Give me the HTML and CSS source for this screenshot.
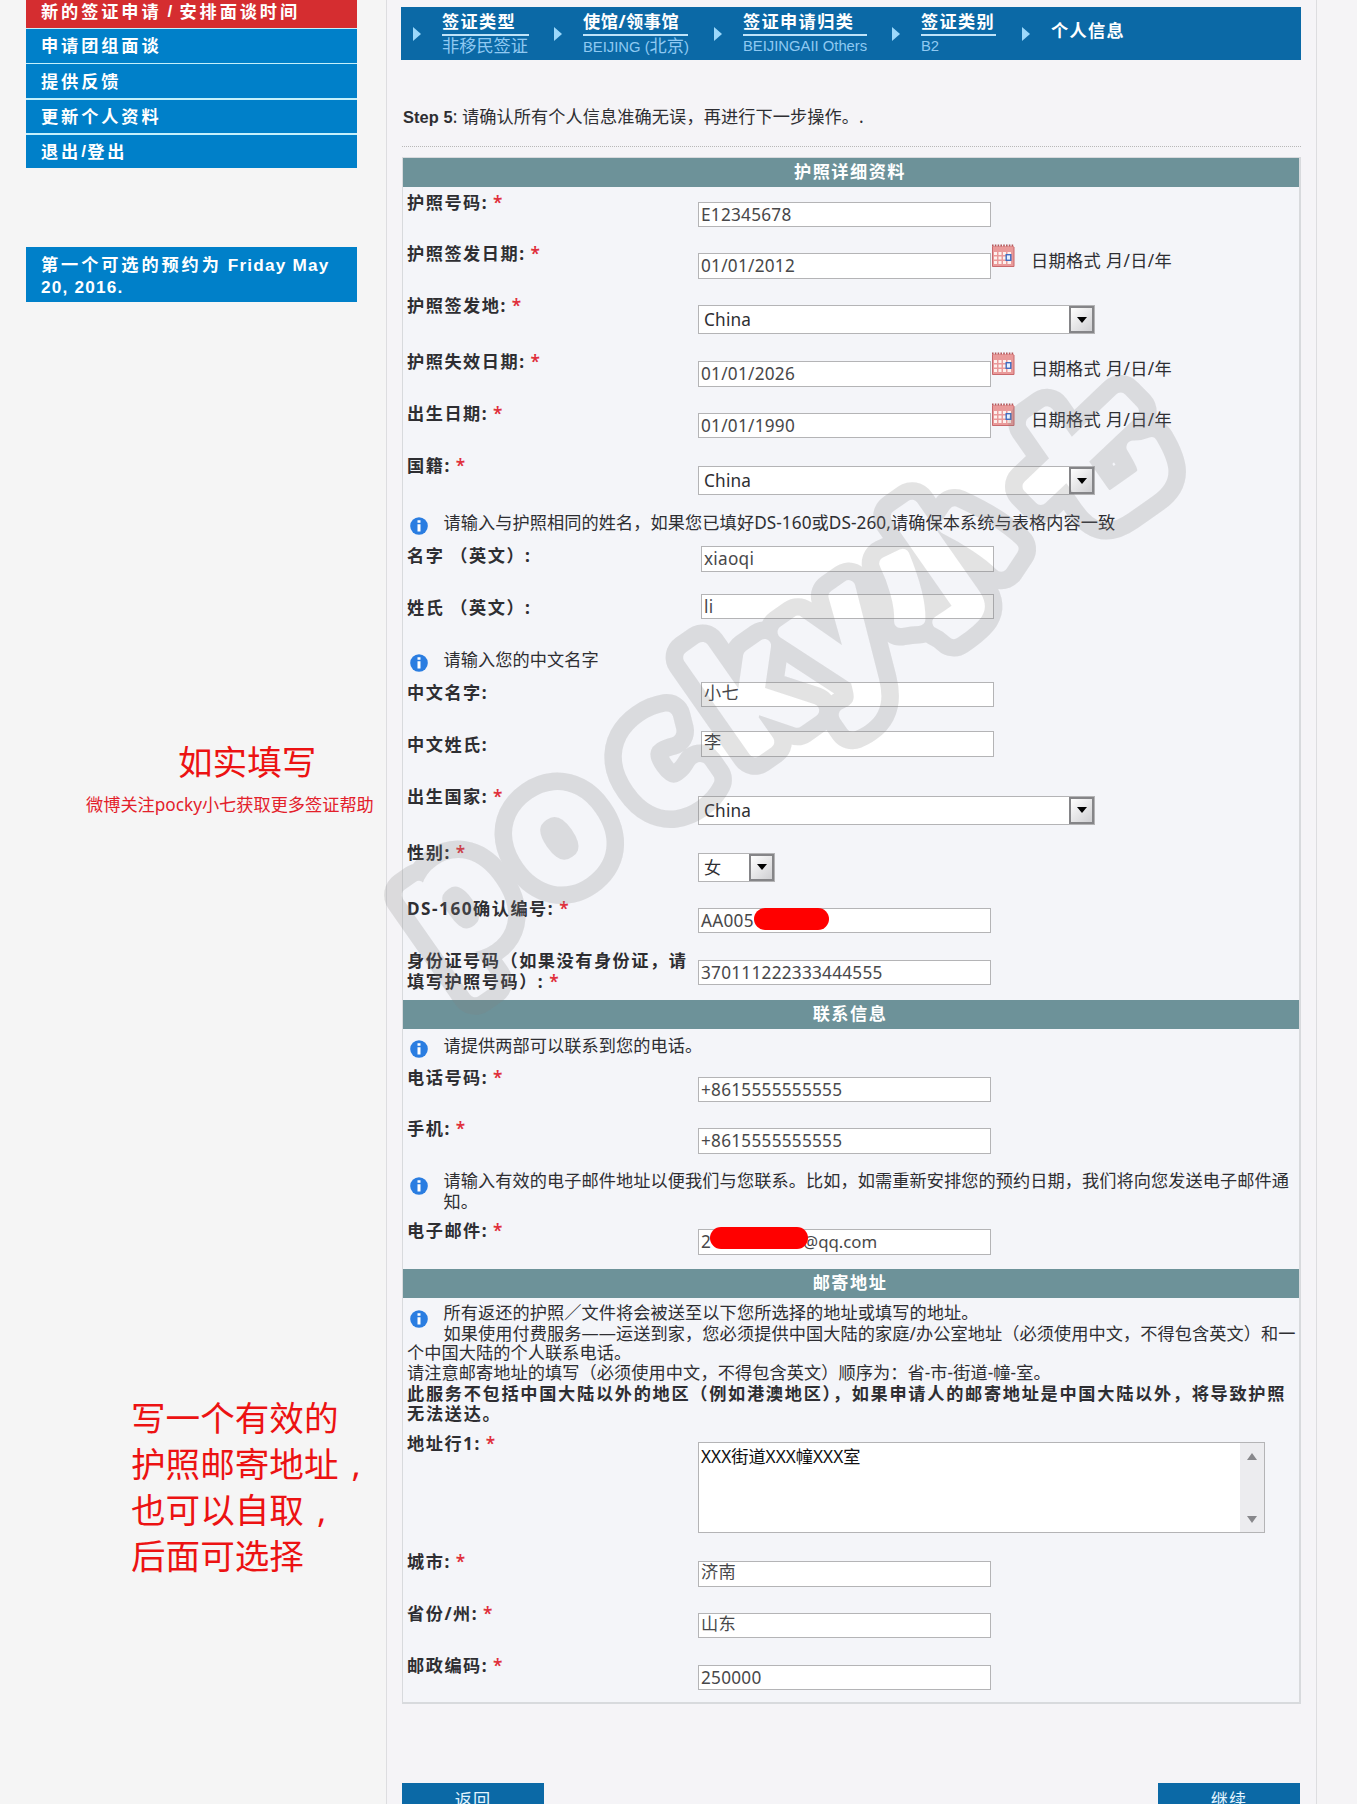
FILE: index.html
```html
<!DOCTYPE html>
<html lang="zh-CN">
<head>
<meta charset="utf-8">
<title>个人信息</title>
<link rel="stylesheet" href="styles.css">
</head>
<body>
<svg class="defs" width="0" height="0" aria-hidden="true">
  <symbol id="info" viewBox="0 0 18 18">
    <circle cx="9" cy="9" r="8.8" fill="#2a7de1"/>
    <path d="M7.5 3.2h3v2.6h-3zM7.5 7.2h3v7.2h-3z" fill="#fff"/>
  </symbol>
  <symbol id="calendar" viewBox="0 0 24 23">
    <rect x="1" y="2" width="22" height="20.5" fill="#e99a9a"/>
    <path d="M1 1.5h22" stroke="#b2595d" stroke-width="2" stroke-dasharray="1.6 1.2"/>
    <path d="M1.5 3v19.5h21.5V3" fill="none" stroke="#c9686c"/>
    <path d="M3 8h3v3H3zM7.5 8h3v3h-3zM12 8h3v3h-3zM16.5 8h3.5v3h-3.5zM3 12.5h3v3H3zM7.5 12.5h3v3h-3zM12 12.5h3v3h-3zM3 17h3v3H3zM7.5 17h3v3h-3zM12 17h3v3h-3zM16.5 17h3.5v3h-3.5z" fill="#fdf1ee"/>
    <rect x="15.2" y="10.7" width="4.6" height="5.6" fill="#e8f1ff" stroke="#3e6cc0" stroke-width="1.4"/>
  </symbol>
</svg>
<div class="page">
  <aside class="sidebar">
    <nav class="menu">
      <a class="menu-item menu-item--active">新的签证申请<span class="latin"> / </span>安排面谈时间</a>
      <a class="menu-item">申请团组面谈</a>
      <a class="menu-item">提供反馈</a>
      <a class="menu-item">更新个人资料</a>
      <a class="menu-item">退出<span class="latin">/</span>登出</a>
    </nav>
    <div class="slot">第一个可选的预约为<span class="latin"> Friday May<br>20, 2016.</span></div>
    <p class="note-big">如实填写</p>
    <p class="note-small">微博关注pocky小七获取更多签证帮助</p>
    <p class="note-address">写一个有效的<br>护照邮寄地址<span class="comma">,</span><br>也可以自取<span class="comma">,</span><br>后面可选择</p>
  </aside>

  <main class="main">
    <ol class="steps">
      <li class="step step--type"><b>签证类型</b><span>非移民签证</span></li>
      <li class="step step--post"><b>使馆/领事馆</b><span>BEIJING (<i>北京</i>)</span></li>
      <li class="step step--class"><b>签证申请归类</b><span>BEIJINGAII Others</span></li>
      <li class="step step--visa"><b>签证类别</b><span>B2</span></li>
      <li class="step step--current"><b>个人信息</b></li>
    </ol>
    <p class="lead"><b>Step 5</b>: 请确认所有个人信息准确无误，再进行下一步操作。.</p>

    <form class="form">
      <h2 class="heading">护照详细资料</h2>
      <section class="passport">
        <div class="row"><label>护照号码:<em>*</em></label><span class="input">E12345678</span></div>
        <div class="row"><label>护照签发日期:<em>*</em></label><span class="input">01/01/2012</span><svg class="cal"><use href="#calendar"/></svg><span class="hint">日期格式 月/日/年</span></div>
        <div class="row row--select"><label>护照签发地:<em>*</em></label><span class="select">China<i></i></span></div>
        <div class="row"><label>护照失效日期:<em>*</em></label><span class="input">01/01/2026</span><svg class="cal"><use href="#calendar"/></svg><span class="hint">日期格式 月/日/年</span></div>
        <div class="row"><label>出生日期:<em>*</em></label><span class="input">01/01/1990</span><svg class="cal"><use href="#calendar"/></svg><span class="hint">日期格式 月/日/年</span></div>
        <div class="row row--nation"><label>国籍:<em>*</em></label><span class="select">China<i></i></span></div>
        <div class="tip"><svg class="info"><use href="#info"/></svg><p>请输入与护照相同的姓名，如果您已填好DS-160或DS-260,请确保本系统与表格内容一致</p></div>
        <div class="row row--name row--given"><label>名字 （英文）:</label><span class="input">xiaoqi</span></div>
        <div class="row row--name row--family"><label>姓氏 （英文）:</label><span class="input">li</span></div>
        <div class="tip"><svg class="info"><use href="#info"/></svg><p>请输入您的中文名字</p></div>
        <div class="row row--name row--cngiven"><label>中文名字:</label><span class="input input--cjk">小七</span></div>
        <div class="row row--name row--cnfamily"><label>中文姓氏:</label><span class="input input--cjk">李</span></div>
        <div class="row row--select"><label>出生国家:<em>*</em></label><span class="select">China<i></i></span></div>
        <div class="row row--select"><label>性别:<em>*</em></label><span class="select select--short">女<i></i></span></div>
        <div class="row"><label>DS-160确认编号:<em>*</em></label><span class="input">AA005<s class="redact redact--ds"></s></span></div>
        <div class="row"><label>身份证号码（如果没有身份证，请<br>填写护照号码）:<em>*</em></label><span class="input">370111222333444555</span></div>
      </section>

      <h2 class="heading">联系信息</h2>
      <section class="contact">
        <div class="tip tip--phones"><svg class="info"><use href="#info"/></svg><p>请提供两部可以联系到您的电话。</p></div>
        <div class="row"><label>电话号码:<em>*</em></label><span class="input">+8615555555555</span></div>
        <div class="row"><label>手机:<em>*</em></label><span class="input">+8615555555555</span></div>
        <div class="tip tip--mail"><svg class="info"><use href="#info"/></svg><p>请输入有效的电子邮件地址以便我们与您联系。比如，如需重新安排您的预约日期，我们将向您发送电子邮件通<br>知。</p></div>
        <div class="row row--mail"><label>电子邮件:<em>*</em></label><span class="input">2<span class="mail-host">@qq.com</span><s class="redact redact--mail"></s></span></div>
      </section>

      <h2 class="heading">邮寄地址</h2>
      <section class="address">
        <div class="tip tip--post"><svg class="info"><use href="#info"/></svg><p>所有返还的护照／文件将会被送至以下您所选择的地址或填写的地址。<br>如果使用付费服务——运送到家，您必须提供中国大陆的家庭/办公室地址（必须使用中文，不得包含英文）和一</p></div>
        <p class="para">个中国大陆的个人联系电话。<br>请注意邮寄地址的填写（必须使用中文，不得包含英文）顺序为：省-市-街道-幢-室。</p>
        <p class="para para--strong">此服务不包括中国大陆以外的地区（例如港澳地区），如果申请人的邮寄地址是中国大陆以外，将导致护照<br>无法送达。</p>
        <div class="row row--area"><label>地址行1:<em>*</em></label><span class="area"><span>XXX街道XXX幢XXX室</span><i class="scroll"></i></span></div>
        <div class="row"><label>城市:<em>*</em></label><span class="input input--cjk">济南</span></div>
        <div class="row"><label>省份/州:<em>*</em></label><span class="input input--cjk">山东</span></div>
        <div class="row"><label>邮政编码:<em>*</em></label><span class="input">250000</span></div>
      </section>
    </form>
    <div class="actions"><a class="button">返回</a><a class="button">继续</a></div>
  </main>

  <svg class="watermark" viewBox="0 0 1360 1806" aria-hidden="true">
    <defs>
      <g id="mark" text-anchor="middle" stroke-linejoin="round">
        <text class="mark-latin" x="-122 0 125 240 342" y="41">pocky</text>
        <text class="mark-cjk" x="470 650" y="46">小七</text>
      </g>
      <mask id="ring" maskUnits="userSpaceOnUse" x="-300" y="-300" width="1200" height="600">
        <use href="#mark" fill="#fff" stroke="#fff" stroke-width="48"/>
        <use href="#mark" fill="#000" stroke="#000" stroke-width="13"/>
      </mask>
    </defs>
    <g transform="translate(559 838) rotate(-35)">
      <rect x="-300" y="-300" width="1200" height="600" fill="#808080" fill-opacity=".22" mask="url(#ring)"/>
    </g>
  </svg>
</div>
</body>
</html>
```
FILE: styles.css
```css
* { box-sizing: border-box; }
body {
  margin: 0;
  background: #fff;
  color: #2e2e32;
  font: 17.2px/21px "Noto Sans", "Noto Sans CJK SC", sans-serif;
}
p, h2, ol { margin: 0; padding: 0; }
i, em { font-style: normal; }
.defs { position: absolute; }

.page {
  position: relative;
  display: flex;
  width: 1357px;
  height: 1804px;
  overflow: hidden;
  background: #f5f4f6;
}

/* sidebar */
.sidebar {
  width: 386px;
  padding-left: 26px;
  background: #f5f5f5;
  white-space: nowrap;
}
.menu { width: 331px; background: #c4f0fb; display: grid; grid-template-rows: 27.5px 33.5px 34px 33.7px 33.5px; gap: 1.5px; }
.menu-item {
  display: flex;
  align-items: center;
  padding-left: 15px;
  background: #0080c9;
  color: #fff;
  font-weight: 700;
  letter-spacing: 2.9px;
  white-space: pre;
}
.menu-item--active { background: #d52d30; padding-bottom: 5px; }
.latin { font-family: "Liberation Sans", sans-serif; letter-spacing: 1.2px; }
.slot {
  width: 331px;
  height: 55px;
  margin-top: 79px;
  padding: 7px 0 0 15px;
  background: #0080c9;
  color: #fff;
  font-weight: 700;
  letter-spacing: 2.9px;
}
.note-big { margin: 437px 0 0 152px; font-size: 34.6px; line-height: 46px; color: #ec1212; }
.note-small { margin: 9px 0 0 60px; color: #e3202a; }
.note-address { margin: 580px 0 0 105px; font-size: 34.6px; line-height: 46px; color: #ec1212; }
.comma { padding-left: 13px; }

/* main column */
.main {
  width: 931px;
  padding: 7px 15px 0 15px;
  border: solid #dddde0;
  border-width: 0 1px;
  background: #f5f4f7;
  white-space: nowrap;
}
.steps {
  display: flex;
  height: 53px;
  margin-left: -1px;
  background: #0b69a6;
  list-style: none;
}
.step {
  display: flex;
  flex-direction: column;
  align-items: flex-start;
  position: relative;
  padding: 3px 0 0 29px;
  margin-left: 12px;
}
.step::before {
  content: "";
  position: absolute;
  left: 0;
  top: 20px;
  border: solid transparent;
  border-width: 7px 0 7px 8px;
  border-left-color: #9cd8fb;
}
.step b { color: #fff; letter-spacing: 1.35px; line-height: 24px; }
.step span {
  align-self: stretch;
  border-top: 2px solid #bfe3f8;
  color: #8fc9f2;
  font: 14.8px/21px "Liberation Sans", "Noto Sans CJK SC", sans-serif;
}
.step i, .step--type span { font-size: 17.2px; }
.step--type { width: 116px; }
.step--post { width: 134px; margin-left: 25px; }
.step--post b { letter-spacing: .5px; }
.step--class { width: 153px; margin-left: 26px; }
.step--visa { width: 104px; margin-left: 25px; }
.step--current { margin-left: 26px; padding-top: 12px; }

.lead { height: 86.5px; padding: 46px 0 0 1px; border-bottom: 1px dotted #b8b8b8; letter-spacing: .08px; }
.lead b { font: 700 16.4px/21px "Liberation Sans", sans-serif; }

.form {
  height: 1546.5px;
  margin-top: 10.5px;
  border: 1px solid #d8dadd;
  border-width: 1px 2px 2px 1px;
  background: #f4f5f9;
}
.heading {
  width: 896px;
  height: 29px;
  padding-right: 2px;
  background: #6d9299;
  color: #fff;
  font-size: 17.2px;
  line-height: 27px;
  letter-spacing: 1.45px;
  text-align: center;
}
.passport { height: 813px; padding-top: 4.5px; }
.contact { height: 240px; padding-top: 5.5px; }
.address { padding-top: 3.5px; }

.row { display: flex; align-items: flex-start; height: 51.8px; }
.row--select { height: 56px; }
.row--nation { height: 57px; }
.row--area { height: 118.5px; margin-top: 9px; }
.row label { width: 295px; padding-left: 4px; font-weight: 700; letter-spacing: 1.5px; white-space: pre; }
.row em { padding-left: 5px; color: #e0303c; font-weight: 600; }

.input, .select, .area {
  position: relative;
  margin-top: 10px;
  border: 1px solid #b4b4b6;
  background: #fff;
}
.input {
  width: 293px;
  height: 25.5px;
  padding-left: 2px;
  color: #48484a;
  line-height: 24px;
  letter-spacing: .26px;
}
.input--cjk { line-height: 20px; }
.row--name .input { margin-left: 3px; }
.row--given .input { margin-top: 1px; }
.row--family .input { margin-top: -3px; }
.row--cngiven .input { margin-top: -.5px; }
.row--cnfamily .input { margin-top: -3px; }

.cal { width: 24px; height: 23px; margin-top: .5px; }
.hint { margin: 6.5px 0 0 16px; letter-spacing: .35px; }

.select {
  display: flex;
  justify-content: space-between;
  width: 397px;
  height: 29px;
  padding-left: 5px;
  line-height: 27px;
  letter-spacing: .2px;
}
.row--nation .select { margin-top: 11.5px; }
.select--short { width: 77px; margin-top: 11px; }
.select i {
  width: 25px;
  border: 2px solid #858588;
  background: linear-gradient(135deg, #fff, #cfcfd2);
  display: grid;
  place-items: center;
}
.select i::after { content: ""; border: solid transparent; border-width: 6px 5px 0; border-top-color: #000; }

.tip { display: flex; height: 33.5px; padding-left: 7px; }
.tip p { margin-left: 15.5px; letter-spacing: .07px; }
.info { width: 18px; height: 18px; margin-top: 5px; flex: none; }
.tip--phones { height: 32px; }
.tip--mail { height: 50px; }
.tip--mail .info { margin-top: 7px; }
.tip--post { height: 41px; }
.tip--post .info { margin-top: 8px; }
.para { padding-left: 4px; line-height: 20.5px; letter-spacing: .07px; }
.para--strong { font-weight: 700; letter-spacing: 1.7px; line-height: 20px; }

.redact { position: absolute; height: 22px; border-radius: 11px; background: #f00; }
.redact--ds { left: 55px; top: -1px; width: 75px; }
.redact--mail { left: 11px; top: -3px; width: 98px; }
.row--mail .input { margin-top: 9px; }
.mail-host { margin-left: 92px; letter-spacing: 0; font-size: 16.8px; }

.area { display: flex; justify-content: space-between; width: 567px; height: 91.5px; margin-top: 9px; padding-left: 2px; color: #111; }
.area > span { padding-top: 3px; }
.scroll {
  display: flex;
  flex-direction: column;
  justify-content: space-between;
  align-items: center;
  width: 24px;
  padding: 10px 0 9px;
  background: #ececef;
}
.scroll::before, .scroll::after { content: ""; border: solid transparent; border-width: 0 5px 7px; border-bottom-color: #88888c; }
.scroll::after { border-width: 7px 5px 0; border-top-color: #88888c; }

.actions { display: flex; justify-content: space-between; margin-top: 79.5px; padding: 0 1px 0 0; }
.button {
  width: 142px;
  height: 40px;
  background: #0b69a6;
  color: #e4f5ff;
  line-height: 33px;
  letter-spacing: 1px;
  text-align: center;
}

/* diagonal watermark lies over the whole page */
.watermark { position: absolute; left: 0; top: 0; width: 1360px; height: 1806px; pointer-events: none; }
.mark-latin { font: 500 150px "Noto Sans", sans-serif; }
.mark-cjk { font: 700 138px "Noto Sans CJK SC", sans-serif; }
```
